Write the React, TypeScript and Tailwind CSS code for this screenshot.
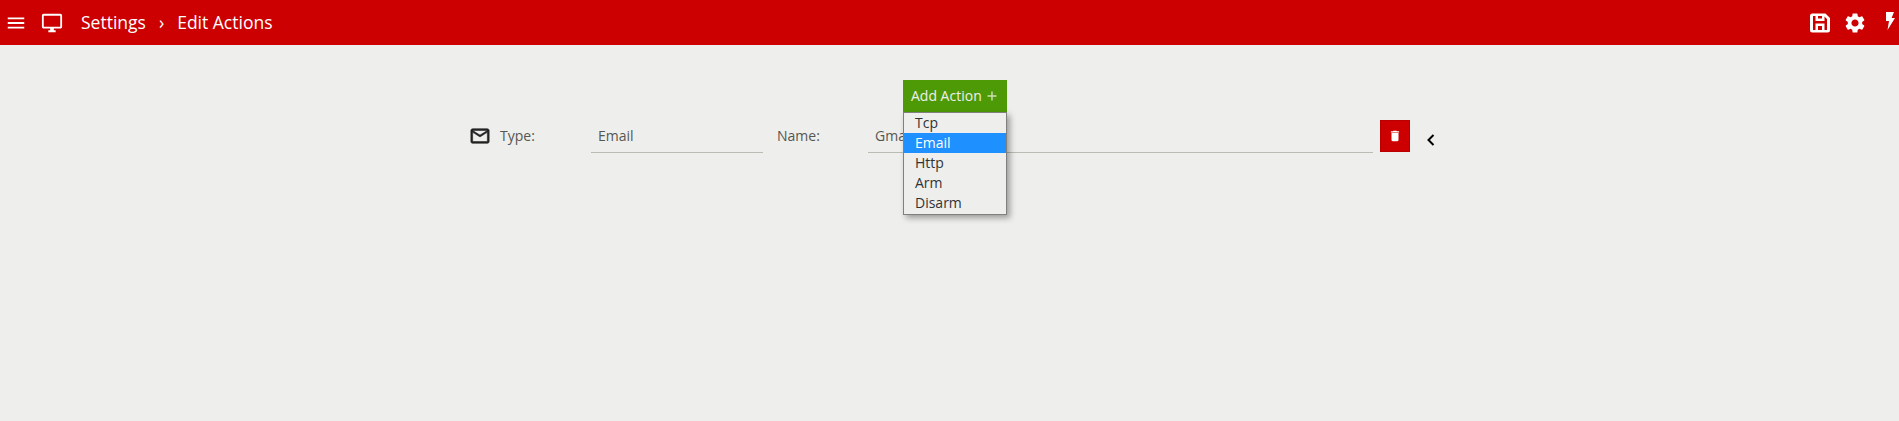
import React from "react";

const font = { fontFamily: '"Open Sans", sans-serif' };

function Header() {
  return (
    <header className="flex h-[45px] items-center bg-[#cc0000] text-white">
      <svg className="ml-[5px] h-[22px] w-[22px]" viewBox="0 0 24 24" fill="white">
        <path d="M3 18h18v-2H3v2zm0-5h18v-2H3v2zm0-7v2h18V6H3z" />
      </svg>
      <svg className="ml-[14px] h-[22px] w-[22px]" viewBox="0 0 24 24" fill="white">
        <path d="M21 2H3c-1.1 0-2 .9-2 2v12c0 1.1.9 2 2 2h7v2H8v2h8v-2h-2v-2h7c1.1 0 2-.9 2-2V4c0-1.1-.9-2-2-2zm0 14H3V4h18v12z" />
      </svg>
      <span className="ml-[18px] text-[17.5px] leading-none">Settings</span>
      <span className="ml-[13px] text-[17.5px] leading-none">›</span>
      <span className="ml-[13px] text-[17.5px] leading-none">Edit Actions</span>
      <div className="ml-auto flex items-center">
        <svg className="h-[24px] w-[24px]" viewBox="0 0 24 24" fill="white">
          <path fillRule="evenodd" d="M5 2.5h12.5L22 7v12a2.5 2.5 0 0 1-2.5 2.5h-15A2.5 2.5 0 0 1 2 19V5a2.5 2.5 0 0 1 2.5-2.5zm0 2.5v14h2.5v-6.5h9V19H19V8l-2.5-2.500V10h-9V5H5zm5 0v2.500h4V5h-4zm0 10v4h4v-4h-4z" />
        </svg>
        <svg className="ml-[11px] h-[24px] w-[24px]" viewBox="0 0 24 24" fill="white">
          <path d="M19.14 12.94c.04-.3.06-.61.06-.94 0-.32-.02-.64-.07-.94l2.03-1.58a.49.49 0 0 0 .12-.61l-1.92-3.32a.49.49 0 0 0-.59-.22l-2.39.96c-.5-.38-1.03-.7-1.62-.94l-.36-2.54a.48.48 0 0 0-.48-.41h-3.84c-.24 0-.43.17-.47.41l-.36 2.54c-.59.24-1.13.57-1.62.94l-2.39-.96c-.22-.08-.47 0-.59.22L2.74 8.87c-.12.21-.08.47.12.61l2.03 1.58c-.05.3-.09.63-.09.94s.02.64.07.94l-2.03 1.58a.49.49 0 0 0-.12.61l1.92 3.32c.12.22.37.29.59.22l2.39-.96c.5.38 1.03.7 1.62.94l.36 2.54c.05.24.24.41.48.41h3.84c.24 0 .44-.17.47-.41l.36-2.54c.59-.24 1.13-.56 1.62-.94l2.39.96c.22.08.47 0 .59-.22l1.92-3.32c.12-.22.07-.47-.12-.61l-2.01-1.58zM12 15.6c-1.98 0-3.6-1.62-3.6-3.6s1.62-3.6 3.6-3.6 3.6 1.62 3.6 3.6-1.62 3.6-3.6 3.6z" />
        </svg>
        <svg className="mb-[4px] ml-[18px] mr-[4px] h-[18px] w-[10px]" viewBox="0 0 10 18" fill="white">
          <path d="M1 0h8L6.6 6H10L2.5 18l1.5-9H1z" />
        </svg>
      </div>
    </header>
  );
}

function AddAction() {
  const items = ["Tcp", "Email", "Http", "Arm", "Disarm"];
  return (
    <div className="relative z-10 ml-[903px] w-[104px]">
      <button className="flex h-[32px] w-[104px] items-center bg-[#4e9a06] pl-[8px] pb-[1px] text-[14px] text-[#eeeeec]">
        Add Action
        <svg className="ml-[4px] h-[12px] w-[12px]" viewBox="0 0 12 12" stroke="white" strokeOpacity="0.7" strokeWidth="1.4">
          <path d="M6 1.500v9M1.500 6h9" />
        </svg>
      </button>
      <ul className="absolute left-0 top-[32px] w-[104px] border border-[#808080] bg-[#eeeeec] pb-[1px] text-[14px] leading-[20px] text-[#2e3436] shadow-[3px_3px_6px_rgba(0,0,0,0.35)]">
        {items.map((it) => (
          <li key={it} className={it === "Email" ? "bg-[#1e90ff] pl-[11px] text-white" : "pl-[11px]"}>
            {it}
          </li>
        ))}
      </ul>
    </div>
  );
}

function Row() {
  return (
    <div className="ml-[470px] mt-[8px] flex h-[33px] w-[970px] items-start text-[14px] text-[#555753]">
      <svg className="mt-[5px] ml-[-1px] h-[22px] w-[22px] text-[#222222]" viewBox="0 0 24 24" fill="currentColor" stroke="currentColor" strokeWidth="0.6">
        <path d="M20 4H4c-1.100 0-1.990.9-1.990 2L2 18c0 1.100.9 2 2 2h16c1.100 0 2-.9 2-2V6c0-1.100-.9-2-2-2zm0 14H4V8l8 5 8-5v10zm-8-7L4 6h16l-8 5z" />
      </svg>
      <span className="ml-[9px] w-[91px] leading-[32px]">Type:</span>
      <div className="h-[33px] w-[172px] border-b border-[#bbbbb6] pl-[7px] leading-[32px]">Email</div>
      <span className="ml-[14px] w-[91px] leading-[32px]">Name:</span>
      <div className="h-[33px] w-[505px] border-b border-[#bbbbb6] pl-[7px] leading-[32px]">Gmail</div>
      <button className="ml-[7px] flex h-[32px] w-[30px] items-center justify-center border border-[#b80000] bg-[#cc0000] text-white">
        <svg className="h-[14px] w-[14px]" viewBox="0 0 24 24" fill="white">
          <path d="M6 19c0 1.100.9 2 2 2h8c1.100 0 2-.9 2-2V7H6v12zM19 4h-3.500l-1-1h-5l-1 1H5v2h14V4z" />
        </svg>
      </button>
      <svg className="ml-[15px] mt-[13px] h-[14px] w-[12px] text-black" viewBox="0 0 12 14" fill="none" stroke="currentColor" strokeWidth="2">
        <path d="M8.500 2 3.500 7l5 5" />
      </svg>
    </div>
  );
}

export default function App() {
  return (
    <div className="h-[421px] w-full overflow-hidden bg-[#eeeeec]" style={font}>
      <Header />
      <main className="pt-[35px]">
        <AddAction />
        <Row />
      </main>
    </div>
  );
}
